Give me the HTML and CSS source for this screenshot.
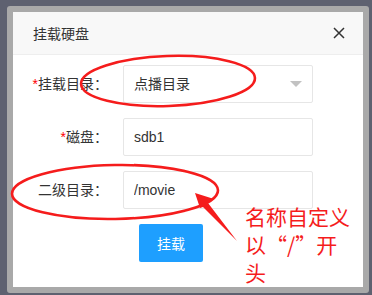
FILE: index.html
```html
<!DOCTYPE html>
<html lang="zh-CN">
  <head>
    <meta charset="UTF-8" />
    <meta name="viewport" content="width=device-width, initial-scale=1.0" />
    <title>挂载硬盘</title>
    <link rel="stylesheet" href="styles.css">
  </head>
  <body>
    <div class="page">
      <div class="layer">
        <div class="layer-title">
          <span>挂载硬盘</span>
          <svg class="close" width="12" height="12" viewBox="0 0 12 12">
            <path d="M1 1 L11 11 M11 1 L1 11" stroke="#333" stroke-width="1.5" fill="none" />
          </svg>
        </div>
        <form class="form">
          <div class="form-item">
            <label><span class="req">*</span>挂载目录：</label>
            <div class="select">
              <span>点播目录</span>
              <i class="edge"></i>
            </div>
          </div>
          <div class="form-item">
            <label><span class="req">*</span>磁盘：</label>
            <input type="text" value="sdb1" />
          </div>
          <div class="form-item">
            <label>二级目录：</label>
            <input type="text" value="/movie" />
          </div>
          <button type="button" class="btn">挂载</button>
        </form>
      </div>

      <!-- red hand-drawn notes over the dialog -->
      <svg class="marks" width="372" height="295" viewBox="0 0 372 295">
        <ellipse cx="168" cy="81" rx="87" ry="25" stroke="#f51c1c" stroke-width="2.6" fill="none" transform="rotate(-2 168 81)" />
        <ellipse cx="115" cy="192" rx="103" ry="27" stroke="#f51c1c" stroke-width="2.6" fill="none" transform="rotate(-1 115 192)" />
        <polygon points="195,193 214,199 208,203 237,241 203,207 200,208" fill="#f51c1c" />
      </svg>
      <div class="note">名称自定义以“/”开头</div>
    </div>
  </body>
</html>
```

FILE: styles.css
```css
body {
  margin: 0;
  background-color: #5e6170;
  font-family: "Liberation Sans", "Noto Sans CJK SC", sans-serif;
  font-size: 14px;
  color: #333;
  overflow: hidden;
}
.page {
  position: relative;
  width: 372px;
  height: 295px;
  padding: 6px 0 0 7px;
  box-sizing: border-box;
}
.layer {
  width: 350px;
  height: 275px;
  background-color: #fff;
  border: 6px solid #a9a9a9;
  border-radius: 3px;
}
.layer-title {
  display: flex;
  justify-content: space-between;
  align-items: center;
  height: 42px;
  padding: 0 18px 0 20px;
  background-color: #f8f8f8;
  border-bottom: 1px solid #eee;
}
.form {
  padding-top: 10px;
}
.form-item {
  display: flex;
  height: 38px;
  margin-bottom: 15px;
}
label {
  width: 110px;
  padding-right: 15px;
  box-sizing: border-box;
  text-align: right;
  line-height: 38px;
}
.req {
  color: #f00;
}
input,
.select {
  width: 190px;
  height: 38px;
  padding-left: 10px;
  box-sizing: border-box;
  border: 1px solid #e6e6e6;
  border-radius: 2px;
  font: inherit;
  color: #333;
  outline: none;
}
.select {
  position: relative;
  line-height: 36px;
}
.edge {
  position: absolute;
  right: 10px;
  top: 15px;
  border-style: solid;
  border-width: 6px 6px 0;
  border-color: #c2c2c2 transparent transparent;
}
.btn {
  display: block;
  width: 64px;
  height: 38px;
  margin-left: 126px;
  border: none;
  border-radius: 2px;
  background-color: #1e9fff;
  color: #fff;
  font: inherit;
}
.marks {
  position: absolute;
  left: 0;
  top: 0;
}
.note {
  position: absolute;
  left: 245px;
  top: 202px;
  width: 108px;
  font-family: "Noto Sans CJK SC", sans-serif;
  font-size: 21px;
  line-height: 28px;
  color: #f51c1c;
}
```
